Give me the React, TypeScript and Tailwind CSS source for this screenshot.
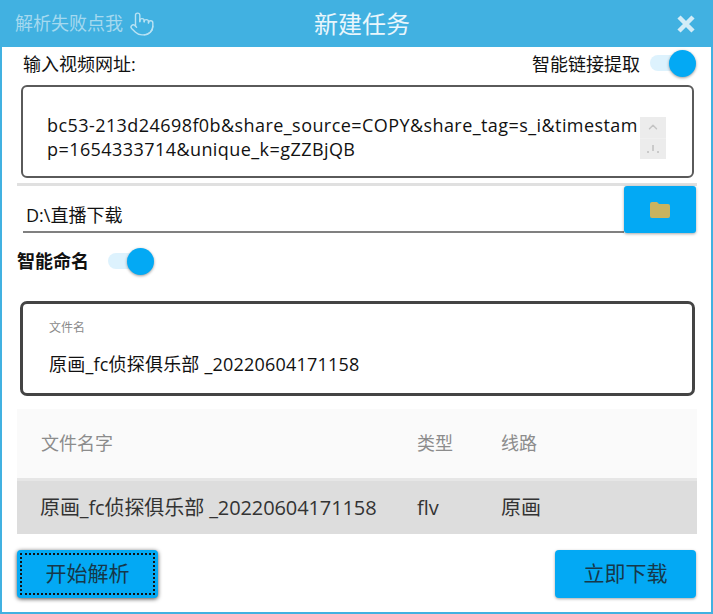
import { Pointer, ChevronUp } from "lucide-react";

const FONT = "font-['Open_Sans','Noto_Sans_CJK_SC',sans-serif]";

function Toggle() {
  return (
    <div className="relative w-[46px] h-[26px] shrink-0 flex items-center">
      <div className="w-[34px] h-[16px] rounded-full bg-[#ddf2fd]" />
      <div className="absolute left-[19px] top-0 w-[27px] h-[27px] rounded-full bg-[#03a9f4] shadow-[0_1px_3px_rgba(0,0,0,0.4)]" />
    </div>
  );
}

function BlueButton({ label, focused }: { label: string; focused?: boolean }) {
  return (
    <button
      className={`w-[141px] h-[48px] rounded-[4px] bg-[#03a9f4] text-[21px] text-[#16384a] flex items-center justify-center ${
        focused
          ? "shadow-[0_1px_4px_rgba(0,0,0,0.7)] outline-2 outline-dotted outline-[#111] -outline-offset-[5px]"
          : "shadow-[0_1px_3px_rgba(0,0,0,0.35)]"
      }`}
    >
      {label}
    </button>
  );
}

export default function App() {
  return (
    <div className={`w-[713px] h-[614px] bg-white border-2 border-t-0 border-[#41b1e1] flex flex-col ${FONT}`}>
      <div className="h-[47px] -mx-[2px] bg-[#41b1e1] shrink-0 flex items-center justify-between pl-[15px] pr-[16px] relative">
        <div className="flex items-center gap-[6px] text-[#a5d9ef] text-[18px]">
          解析失败点我
          <Pointer size={26} strokeWidth={1.3} className="text-[#b9e2f3]" />
        </div>
        <div className="absolute left-[314px] top-[8px] text-[#e9f6fc] text-[24px] leading-[32px]">新建任务</div>
        <svg width="18" height="18" viewBox="0 0 18 18" className="mr-[2px] mt-[1px]">
          <path d="M2 2l14 14M16 2L2 16" stroke="#d3ecf7" strokeWidth="4.5" fill="none" />
        </svg>
      </div>

      <div className="flex-1 pl-[15px] pr-[14px] flex flex-col">
        <div className="h-[34px] flex items-center justify-between pl-[6px] text-[18px] text-[#111]">
          <span>输入视频网址:</span>
          <div className="flex items-center gap-[10px] pr-[1px]">
            <span>智能链接提取</span>
            <div className="-mt-[2px]">
              <Toggle />
            </div>
          </div>
        </div>

        <div className="mt-[4px] ml-[4px] mr-[3px] h-[93px] rounded-[6px] border-2 border-[#5a5a5a] flex items-start pl-[24px] pr-[24px] pt-[26px]">
          <div className="w-[594px] shrink-0 text-[18px] tracking-[0.43px] leading-[24px] text-[#111] break-all">
            bc53-213d24698f0b&amp;share_source=COPY&amp;share_tag=s_i&amp;timestamp=1654333714&amp;unique_k=gZZBjQB
          </div>
          <div className="w-[26px] h-[42px] mt-[4px] -ml-[1px] shrink-0 flex flex-col gap-[1px] bg-[#f0f0f0]">
            <div className="flex-1 flex items-center justify-center bg-[#ececec]">
              <ChevronUp size={14} strokeWidth={2.5} className="text-[#c4c4c4]" />
            </div>
            <div className="flex-1 flex items-center justify-center bg-[#ececec]">
              <svg width="14" height="10" viewBox="0 0 14 10">
                <path d="M7 1v6M2 7v2M12 7v2" stroke="#bdbdbd" strokeWidth="1.4" fill="none" />
              </svg>
            </div>
          </div>
        </div>

        <div className="mt-[5px] h-[3px] bg-[#e0e0e0]" />

        <div className="flex h-[47px]">
          <div className="flex-1 ml-[6px] border-b-2 border-[#808080] pl-[3px] pt-[13px] flex items-center text-[18px] text-[#111]">
            D:\直播下载
          </div>
          <button className="w-[72px] h-[47px] mr-[1px] rounded-[3px] bg-[#03a9f4] shadow-[0_1px_3px_rgba(0,0,0,0.35)] flex items-center justify-center">
            <svg width="20" height="16" viewBox="0 0 20 16">
              <path d="M0 2a2 2 0 0 1 2-2h5l2 2h9a2 2 0 0 1 2 2v10a2 2 0 0 1-2 2H2a2 2 0 0 1-2-2z" fill="#c9b35f" />
            </svg>
          </button>
        </div>

        <div className="mt-[14px] h-[28px] flex items-center">
          <span className="w-[91px] font-bold text-[18px] text-[#111]">智能命名</span>
          <Toggle />
        </div>

        <div className="mt-[26px] ml-[3px] mr-[2px] h-[95px] rounded-[7px] border-[3px] border-[#444] pl-[26px] pt-[15px]">
          <div className="text-[12px] leading-[18px] text-[#8a8a8a]">文件名</div>
          <div className="mt-[14px] text-[18px] tracking-[0.2px] leading-[26px] text-[#111]">
            原画_fc侦探俱乐部 _20220604171158
          </div>
        </div>

        <div className="mt-[13px]">
          <div className="h-[72px] bg-[#fafafa] border-b-[3px] border-[#e6e6e6] flex items-center pl-[24px] text-[18px] text-[#8c8c8c]">
            <span className="w-[376px]">文件名字</span>
            <span className="w-[84px]">类型</span>
            <span>线路</span>
          </div>
          <div className="h-[53px] bg-[#dddddd] flex items-center pl-[23px] text-[20px] text-[#333]">
            <span className="w-[377px] whitespace-nowrap tracking-[-0.1px]">原画_fc侦探俱乐部 _20220604171158</span>
            <span className="w-[84px]">flv</span>
            <span>原画</span>
          </div>
        </div>

        <div className="mt-[16px] flex justify-between pr-[1px]">
          <BlueButton label="开始解析" focused />
          <BlueButton label="立即下载" />
        </div>
      </div>
    </div>
  );
}
